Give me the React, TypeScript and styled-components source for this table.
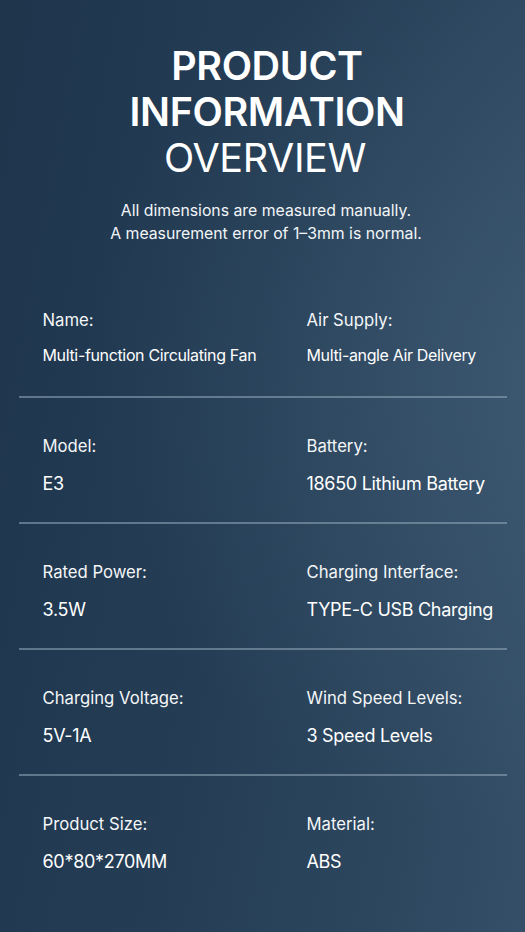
import React from "react";
import styled, { createGlobalStyle } from "styled-components";

const Global = createGlobalStyle`
  html, body { margin: 0; padding: 0; }
  body { background: #22394f; font-family: Inter, "Noto Sans", sans-serif; }
`;

const Page = styled.div`
  width: 525px;
  height: 932px;
  overflow: hidden;
  background:
    radial-gradient(ellipse at 110% 40%, rgba(80, 110, 135, 0.4), rgba(80, 110, 135, 0) 60%),
    linear-gradient(100deg, #1e354c 0%, #243d55 45%, #2d475f 80%, #354f68 100%);
  color: #ffffff;
  display: flex;
  flex-direction: column;
  align-items: center;
  box-sizing: border-box;
  padding-top: 43px;
`;

const Header = styled.header`
  display: flex;
  flex-direction: column;
  align-items: center;
  padding-left: 9px;
`;

const Title = styled.h1`
  margin: 0;
  text-align: center;
  font-size: 39.5px;
  line-height: 46px;
  font-weight: 600;
  letter-spacing: -0.4px;
`;

const TitleLight = styled.span`
  display: block;
  font-weight: 400;
  margin-right: 4px;
`;

const Subtitle = styled.p`
  margin: 18px 0 0;
  padding-right: 2px;
  text-align: center;
  font-size: 15.8px;
  line-height: 23px;
  font-weight: 400;
  color: #f2f5f8;
`;

const Table = styled.div`
  width: 488px;
  margin-top: 27px;
  display: flex;
  flex-direction: column;
`;

const Row = styled.div<{ $last?: boolean }>`
  display: grid;
  grid-template-columns: 264px 1fr;
  height: 126px;
  box-sizing: border-box;
  padding: 37px 0 0 24px;
  border-bottom: ${(p) => (p.$last ? "none" : "2px solid rgba(150, 170, 185, 0.55)")};
`;

const Cell = styled.div`
  display: flex;
  flex-direction: column;
`;

const Label = styled.div`
  font-size: 16.7px;
  line-height: 22px;
  color: #f4f6f8;
`;

const Value = styled.div<{ $small?: boolean }>`
  margin-top: ${(p) => (p.$small ? "13px" : "16px")};
  font-size: ${(p) => (p.$small ? "16px" : "18px")};
  line-height: 22px;
  color: #ffffff;
  letter-spacing: ${(p) => (p.$small ? "-0.35px" : "-0.3px")};
`;

const rows: [string, string, string, string, boolean?][] = [
  ["Name:", "Multi-function Circulating Fan", "Air Supply:", "Multi-angle Air Delivery", true],
  ["Model:", "E3", "Battery:", "18650 Lithium Battery"],
  ["Rated Power:", "3.5W", "Charging Interface:", "TYPE-C USB Charging"],
  ["Charging Voltage:", "5V-1A", "Wind Speed Levels:", "3 Speed Levels"],
  ["Product Size:", "60*80*270MM", "Material:", "ABS"],
];

export default function App() {
  return (
    <>
      <Global />
      <Page>
        <Header>
          <Title>
            PRODUCT
            <br />
            INFORMATION
            <TitleLight>OVERVIEW</TitleLight>
          </Title>
          <Subtitle>
            All dimensions are measured manually.
            <br />
            A measurement error of 1–3mm is normal.
          </Subtitle>
        </Header>
        <Table>
          {rows.map(([l1, v1, l2, v2, small], i) => (
            <Row key={l1} $last={i === rows.length - 1}>
              <Cell>
                <Label>{l1}</Label>
                <Value $small={small}>{v1}</Value>
              </Cell>
              <Cell>
                <Label>{l2}</Label>
                <Value $small={small}>{v2}</Value>
              </Cell>
            </Row>
          ))}
        </Table>
      </Page>
    </>
  );
}
